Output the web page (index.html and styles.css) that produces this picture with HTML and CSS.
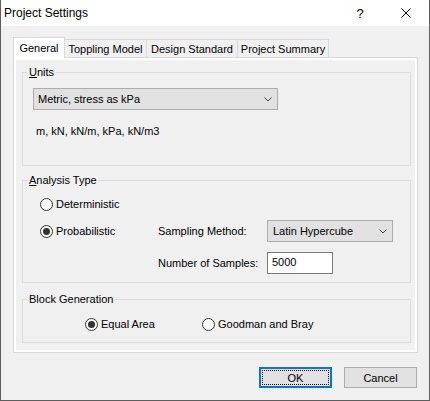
FILE: index.html
```html
<!DOCTYPE html>
<html lang="en">
<head>
  <meta charset="UTF-8" />
  <title>Project Settings</title>
  <link rel="stylesheet" href="styles.css">
</head>
<body>
  <div class="window">
    <div class="titlebar">
      <span class="title">Project Settings</span>
      <span class="caption-btn help">?</span>
      <span class="caption-btn close">
        <svg width="10" height="10" viewBox="0 0 10 10">
          <path d="M0.5 0.5 L9.5 9.5 M9.5 0.5 L0.5 9.5" stroke="#000" stroke-width="1" fill="none"/>
        </svg>
      </span>
    </div>

    <div class="dialog">
      <div class="tabs">
        <div class="tab active tab-general">General</div>
        <div class="tab tab-toppling">Toppling Model</div>
        <div class="tab tab-design">Design Standard</div>
        <div class="tab tab-summary">Project Summary</div>
      </div>

      <div class="tab-page">
        <div class="page">
          <!-- Units -->
          <fieldset class="group group-units">
            <legend><u>U</u>nits</legend>
            <div class="units-body">
              <div class="combo combo-units">
                <span>Metric, stress as kPa</span>
                <svg class="chevron" width="8" height="5" viewBox="0 0 8 5">
                  <polyline points="0.5,0.5 4,4 7.5,0.5" stroke="#444" stroke-width="1" fill="none"/>
                </svg>
              </div>
              <p class="unit-list">m, kN, kN/m, kPa, kN/m3</p>
            </div>
          </fieldset>

          <!-- Analysis Type -->
          <fieldset class="group group-analysis">
            <legend><u>A</u>nalysis Type</legend>
            <div class="analysis-body">
              <div class="row">
                <label class="radio"><span class="bullet"></span>Deterministic</label>
              </div>
              <div class="row row-sampling">
                <label class="radio radio-wide checked"><span class="bullet"></span>Probabilistic</label>
                <span class="field-label">Sampling Method:</span>
                <div class="combo combo-sampling">
                  <span>Latin Hypercube</span>
                  <svg class="chevron" width="8" height="5" viewBox="0 0 8 5">
                    <polyline points="0.5,0.5 4,4 7.5,0.5" stroke="#444" stroke-width="1" fill="none"/>
                  </svg>
                </div>
              </div>
              <div class="row row-samples">
                <span class="field-label">Number of Samples:</span>
                <div class="textbox">5000</div>
              </div>
            </div>
          </fieldset>

          <!-- Block Generation -->
          <fieldset class="group group-block">
            <legend>Block Generation</legend>
            <div class="block-body">
              <label class="radio radio-equal checked"><span class="bullet"></span>Equal Area</label>
              <label class="radio"><span class="bullet"></span>Goodman and Bray</label>
            </div>
          </fieldset>
        </div>
      </div>

      <div class="buttons">
        <button class="btn btn-default"><span class="focus">OK</span></button>
        <button class="btn">Cancel</button>
      </div>
    </div>
  </div>
</body>
</html>
```

FILE: styles.css
```css
* {
  box-sizing: border-box;
  margin: 0;
  padding: 0;
}

body {
  font-family: "Liberation Sans", Arial, sans-serif;
  font-size: 11px;
  color: #000;
  background: #3c3c3c;
}

.window {
  width: 430px;
  height: 401px;
  background: #f0f0f0;
  border: 1px solid #5d5d5d;
  border-top: none;
  display: flex;
  flex-direction: column;
}

/* Title bar */
.titlebar {
  height: 26px;
  background: #fff;
  display: flex;
  align-items: center;
  padding-left: 3px;
}

.title {
  flex: 1;
  font-size: 12px;
}

.caption-btn {
  width: 46px;
  height: 26px;
  display: flex;
  align-items: center;
  justify-content: center;
}

.help {
  font-size: 13px;
}

/* Dialog body */
.dialog {
  padding: 11px 11px 0 12px;
}

.tabs {
  display: flex;
  align-items: flex-end;
  height: 21px;
  margin-bottom: -1px;
}

.tab {
  height: 19px;
  border: 1px solid #d9d9d9;
  background: #f0f0f0;
  display: flex;
  align-items: center;
  justify-content: center;
  margin-left: -1px;
  padding-top: 1px;
}

.tab.active {
  height: 21px;
  background: #fff;
  border-bottom: none;
  margin-left: 0;
  padding-top: 0;
  padding-bottom: 1px;
  position: relative;
  z-index: 1;
}

.tab-general  { width: 52px; }
.tab-toppling { width: 83px; }
.tab-design   { width: 92px; }
.tab-summary  { width: 92px; }

.tab-page {
  height: 296px;
  border: 1px solid #d9d9d9;
  background: #fff;
  padding: 2px;
}

.page {
  height: 100%;
  background: #f0f0f0;
  padding: 4px 4px 0 6px;
}

/* Group boxes */
.group {
  border: 1px solid #dcdcdc;
  padding: 0;
  min-width: 0;
}

.group legend {
  margin-left: 5px;
  padding: 0 1px;
  line-height: 16px;
}

.group-units    { height: 102px; }
.group-analysis { height: 111px; margin-top: 6px; }
.group-block    { height: 52px;  margin-top: 8px; }

.units-body {
  padding: 8px 0 0 10px;
}

.combo {
  height: 22px;
  background: #e1e1e1;
  border: 1px solid #adadad;
  display: flex;
  align-items: center;
  justify-content: space-between;
  padding: 0 5px 0 4px;
}

.combo-units    { width: 245px; }
.combo-sampling { width: 126px; padding-left: 5px; }

.chevron {
  display: block;
}

.unit-list {
  margin-top: 13px;
  padding-left: 3px;
  line-height: 16px;
}

.analysis-body {
  padding: 5px 0 0 17px;
}

.row {
  display: flex;
  align-items: center;
  height: 22px;
}

.row-sampling { margin-top: 5px; }
.row-samples  { margin-top: 10px; padding-left: 118px; }

.field-label {
  width: 109px;
}

.textbox {
  width: 66px;
  height: 22px;
  background: #fff;
  border: 1px solid #7a7a7a;
  padding: 1px 4px 0;
  line-height: 16px;
}

/* Radio buttons */
.radio {
  display: flex;
  align-items: center;
  gap: 3px;
  line-height: 16px;
}

.radio-wide  { width: 118px; }
.radio-equal { width: 117px; }

.bullet {
  width: 13px;
  height: 13px;
  border: 1px solid #333;
  border-radius: 50%;
  background: #fff;
  display: flex;
  align-items: center;
  justify-content: center;
}

.checked .bullet::after {
  content: "";
  width: 7px;
  height: 7px;
  border-radius: 50%;
  background: #333;
}

.block-body {
  display: flex;
  padding: 9px 0 0 62px;
}

/* Buttons */
.buttons {
  display: flex;
  justify-content: flex-end;
  gap: 12px;
  margin-top: 14px;
  padding-right: 1px;
}

.btn {
  width: 73px;
  height: 21px;
  font: inherit;
  background: #e1e1e1;
  border: 1px solid #adadad;
  display: flex;
  align-items: center;
  justify-content: center;
}

.btn-default {
  border: 2px solid #0078d7;
  padding: 1px;
}

.btn-default .focus {
  flex: 1;
  align-self: stretch;
  display: flex;
  align-items: center;
  justify-content: center;
  border: 1px dotted #000;
}
```
